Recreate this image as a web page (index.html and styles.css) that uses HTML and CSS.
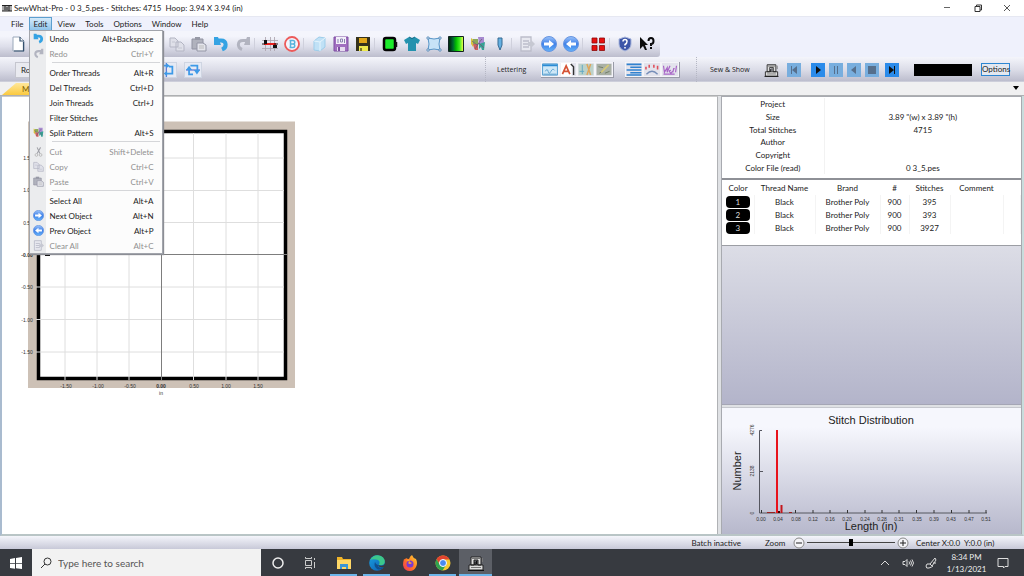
FILE: index.html
```html
<!DOCTYPE html>
<html lang="en">
<head>
<meta charset="utf-8">
<title>SewWhat-Pro</title>
<link rel="stylesheet" href="styles.css">
</head>
<body>
<svg class="defs" aria-hidden="true">
  <defs>
    <linearGradient id="ball" x1="0" y1="0" x2="0" y2="1"><stop offset="0" stop-color="#9cc4fa"/><stop offset=".5" stop-color="#3f80e8"/><stop offset="1" stop-color="#64b4fa"/></linearGradient>
    <linearGradient id="spectrum"><stop offset=".1" stop-color="#031"/><stop offset=".3" stop-color="#063"/><stop offset=".5" stop-color="#0b0"/><stop offset=".75" stop-color="#4e2"/><stop offset="1" stop-color="#ff5"/></linearGradient>
    <linearGradient id="edgeg" x1="0" y1="0" x2="1" y2="1"><stop offset="0" stop-color="#1a9fe0"/><stop offset="1" stop-color="#0b5cb0"/></linearGradient>
    <linearGradient id="foxg" x1="1" y1="0" x2="0" y2="1"><stop offset="0" stop-color="#ffd83a"/><stop offset=".5" stop-color="#ff7a22"/><stop offset="1" stop-color="#f0305a"/></linearGradient>
  </defs>
  <symbol id="i-copy" viewBox="0 0 16 16"><path d="M1 2h5l3 3v6H1zM7 6h5l3 3v6H7z" fill="#dfe0e9" stroke="#b3b5c3"/><path d="M9 12h4M3 6h3" stroke="#c3c5d0"/></symbol>
  <symbol id="i-paste" viewBox="0 0 16 16"><path d="M1 3h11v10H1z" fill="#b0b2bd" stroke="#9193a2"/><path d="M4 1h5v3H4z" fill="#9799a6"/><path d="M6 7h6l3 2v6H6z" fill="#e4e5ec" stroke="#9496a5"/><path d="M8 10h5M8 12h5" stroke="#bbb"/></symbol>
  <symbol id="i-undo" viewBox="0 0 16 16"><path d="M4 4.500h4c6 0 6 7 1 9" fill="none" stroke="#35a3e3" stroke-width="4"/><path d="M1 1h4l3 8H1z" fill="#35a3e3"/></symbol>
  <symbol id="i-redo" viewBox="0 0 16 16"><path d="M12 4.500H8c-6 0-6 7-1 9" fill="none" stroke="#b2b4c0" stroke-width="3"/><path d="M15 1h-3L9 9h6z" fill="#b2b4c0"/></symbol>
  <symbol id="i-right" viewBox="0 0 16 16"><circle cx="8" cy="8" r="7.500" fill="url(#ball)" stroke="#6795e0"/><path d="M3 6.500h5V4l5 4-5 4V9.500H3z" fill="#fff"/></symbol>
  <symbol id="i-left" viewBox="0 0 16 16"><circle cx="8" cy="8" r="7.500" fill="url(#ball)" stroke="#6795e0"/><path d="M13 6.500H8V4L3 8l5 4V9.500h5z" fill="#fff"/></symbol>
  <symbol id="i-list" viewBox="0 0 16 16"><path d="M2 1h10v14H2zM4 5h6M4 8h6M4 11h6" fill="#e8e9f0" stroke="#bcbdca" stroke-width="1.300"/><path d="M9 6h3V4l4 4-4 4v-2H9z" fill="#c6c8d2"/></symbol>
  <symbol id="i-split" viewBox="0 0 16 16"><path d="M1 2l4 3-2 6-2-3z" fill="#d5c23a"/><path d="M3 3h5v5H3z" fill="#8ba75a"/><path d="M8 1h6v7H9z" fill="#a78ad0"/><path d="M3 8h5v6H5l-1-2z" fill="#d0605e"/><path d="M9 8l6-2-1 8h-2l-1-3-2 2z" fill="#35a294"/><path d="M2 5l5 4 5-6M5 13l4-6 5 5" fill="none" stroke="#6d5a78" stroke-width=".8"/></symbol>
  <symbol id="i-machine" viewBox="0 0 16 16"><path d="M1 10h14v5H1zM3 2h10v8h-3V5H6v5H3z" fill="#ddd" stroke="#222"/><path d="M4 3.500h8M3 12.500h10M14.500 3v4" stroke="#777"/><path d="M7 7v3M8.500 6v3M0 15.500h16" stroke="#111"/></symbol>
</svg>

<div class="window">
  <header class="titlebar">
    <svg class="appicon" viewBox="0 0 10 8"><path d="M0 1h10v6H0z" fill="#aaa"/><path d="M0 1.500h10M0 7h10M3 2v4M7 2v5M5 3v3" stroke="#222" fill="none"/></svg>
    <h1 class="title">SewWhat-Pro - 0 3_5.pes - Stitches: 4715&nbsp; Hoop: 3.94 X 3.94 (in)</h1>
    <div class="captions">
      <button aria-label="Minimize"><svg viewBox="0 0 8 8"><path d="M1 3.500h6" stroke="#666"/></svg></button>
      <button aria-label="Restore"><svg viewBox="0 0 8 8"><path d="M1 2.500h5v5H1zM2.500 2V1h5v5H6" fill="none" stroke="#333"/></svg></button>
      <button aria-label="Close"><svg viewBox="0 0 8 8"><path d="M1 1l6 6M7 1L1 7" stroke="#444" stroke-width=".9"/></svg></button>
    </div>
  </header>

  <nav class="menubar">
    <button>File</button>
    <div class="menuhost">
      <button class="open" aria-expanded="true">Edit</button>
      <div class="menu" role="menu">
        <button role="menuitem"><svg><use href="#i-undo"/></svg><span>Undo</span><kbd>Alt+Backspace</kbd></button>
        <button role="menuitem" disabled><svg><use href="#i-redo"/></svg><span>Redo</span><kbd>Ctrl+Y</kbd></button>
        <hr>
        <button role="menuitem"><i></i><span>Order Threads</span><kbd>Alt+R</kbd></button>
        <button role="menuitem"><i></i><span>Del Threads</span><kbd>Ctrl+D</kbd></button>
        <button role="menuitem"><i></i><span>Join Threads</span><kbd>Ctrl+J</kbd></button>
        <button role="menuitem"><i></i><span>Filter Stitches</span><kbd></kbd></button>
        <button role="menuitem"><svg><use href="#i-split"/></svg><span>Split Pattern</span><kbd>Alt+S</kbd></button>
        <hr>
        <button role="menuitem" disabled><svg viewBox="0 0 16 16"><path d="M6 2l4 9M11 2L6 11" stroke="#9fa0a7" stroke-width="1.500"/><circle cx="5" cy="13" r="2" fill="none" stroke="#aaa"/><circle cx="11" cy="13" r="2" fill="none" stroke="#aaa"/></svg><span>Cut</span><kbd>Shift+Delete</kbd></button>
        <button role="menuitem" disabled><svg><use href="#i-copy"/></svg><span>Copy</span><kbd>Ctrl+C</kbd></button>
        <button role="menuitem" disabled><svg><use href="#i-paste"/></svg><span>Paste</span><kbd>Ctrl+V</kbd></button>
        <hr>
        <button role="menuitem"><i></i><span>Select All</span><kbd>Alt+A</kbd></button>
        <button role="menuitem"><svg><use href="#i-right"/></svg><span>Next Object</span><kbd>Alt+N</kbd></button>
        <button role="menuitem"><svg><use href="#i-left"/></svg><span>Prev Object</span><kbd>Alt+P</kbd></button>
        <button role="menuitem" disabled><svg><use href="#i-list"/></svg><span>Clear All</span><kbd>Alt+C</kbd></button>
      </div>
    </div>
    <button>View</button>
    <button>Tools</button>
    <button>Options</button>
    <button>Window</button>
    <button>Help</button>
  </nav>

  <div class="toolrow">
    <div class="toolbar main">
      <button aria-label="New"><svg viewBox="0 0 16 16"><path d="M3 1h7l4 4v10H3z" fill="#fff" stroke="#9aa8ba"/><path d="M10 1v4h4M13.500 6v9H4" fill="none" stroke="#34506e" stroke-width="1.200"/></svg></button>
      <span class="covered"></span>
      <button aria-label="Copy"><svg><use href="#i-copy"/></svg></button>
      <button aria-label="Paste"><svg><use href="#i-paste"/></svg></button>
      <button aria-label="Undo"><svg><use href="#i-undo"/></svg></button>
      <button aria-label="Redo"><svg><use href="#i-redo"/></svg></button>
      <span class="sep"></span>
      <button aria-label="Stitches"><svg viewBox="0 0 16 16"><path d="M3.500 1v14M8.500 1v14M12.500 1v14M0 4.500h16M0 12.500h16" stroke="#aaa0aa" stroke-width=".8"/><path d="M2 8h12" stroke="#e8201c" stroke-width="2"/><path d="M2 4h3v4H2zM11 9h4v3h-4z" fill="#111"/><path d="M0 8h3M12 8h4" stroke="#311"/></svg></button>
      <button aria-label="Stitch B"><svg viewBox="0 0 16 16"><circle cx="8" cy="8" r="7" fill="#f4f4fc" stroke="#ec5a5a" stroke-width="1.800"/><path d="M5.500 4.500h3.500a1.500 1.500 0 010 3.500H6m3 0a1.700 1.700 0 010 3.500H5.500M6.500 4.500v7" fill="none" stroke="#59b4dc" stroke-width="1.500"/></svg></button>
      <span class="sep"></span>
      <button aria-label="3D view"><svg viewBox="0 0 16 16"><path d="M3 5l5-4 6 1v9l-5 4-6-1z" fill="#c0e1f6" stroke="#9dcdea"/><path d="M3 5l6 1 5-4M9 6v9" stroke="#e5f4fc" fill="none"/></svg></button>
      <button aria-label="Save as"><svg viewBox="0 0 16 16"><path d="M1 1h14v14H1z" fill="#a16fc0" stroke="#7e4ea3"/><path d="M3 1h10v7H3z" fill="#f4f0fa"/><path d="M5 3v4M7.500 3h2v3h-2zM11.500 3v4" stroke="#8a85b0" fill="none"/><path d="M4 11h8v4H4z" fill="#e6dcf0"/><path d="M6 11v4" stroke="#7e4ea3" stroke-width="2"/></svg></button>
      <button aria-label="Save"><svg viewBox="0 0 16 16"><path d="M1 1h14v14H1z" fill="#35321c"/><path d="M4 2h8v5H4z" fill="#e1a71a"/><path d="M4 10h9v5H4z" fill="#eee94d"/><path d="M6 12v3" stroke="#55511f" stroke-width="1.500"/></svg></button>
      <span class="sep"></span>
      <button aria-label="Hoop color"><svg viewBox="0 0 16 16"><rect x="2" y="2" width="11" height="12" rx="2" fill="#1cec2c" stroke="#050505" stroke-width="2.500"/><path d="M14 6v5" stroke="#111" stroke-width="2.500"/></svg></button>
      <button aria-label="Garment"><svg viewBox="0 0 16 16"><path d="M0 4l5-3q3 2 6 0l5 3-2 4-2-1v8H4V7L2 8z" fill="#2492ae"/><path d="M5 1q3 3 6 0" stroke="#126a88" fill="none"/></svg></button>
      <button aria-label="Resize"><svg viewBox="0 0 16 16"><path d="M2 2q6 2 12 0-2 6 0 12-6-2-12 0 2-6 0-12z" fill="#c6e2f7" stroke="#5795c8"/><path d="M1 1h2v2H1zM13 1h2v2h-2zM1 13h2v2H1zM13 13h2v2h-2z" fill="#fff" stroke="#4d83b5" stroke-width=".8"/></svg></button>
      <button aria-label="Palette"><svg viewBox="0 0 16 16"><path d="M.500.500h15v15H.500z" fill="url(#spectrum)" stroke="#122"/></svg></button>
      <button aria-label="Split"><svg><use href="#i-split"/></svg></button>
      <button aria-label="Pen"><svg viewBox="0 0 16 16"><path d="M6 2h4v7l-2 5-2-5z" fill="#65b0e2" stroke="#376a92"/></svg></button>
      <span class="sep"></span>
      <button aria-label="Clear"><svg><use href="#i-list"/></svg></button>
      <button aria-label="Next"><svg><use href="#i-right"/></svg></button>
      <button aria-label="Previous"><svg><use href="#i-left"/></svg></button>
      <span class="sep"></span>
      <button aria-label="Arrange"><svg viewBox="0 0 16 16"><path d="M2 2h5v5H2zM9.500 2h5v5h-5zM2 9.500h5v5H2zM9.500 9.500h5v5h-5z" fill="#e81010" stroke="#8d0909" stroke-width=".8"/></svg></button>
      <span class="sep"></span>
      <button aria-label="Help"><svg viewBox="0 0 16 16"><path d="M8 1l6 2v5q0 5-6 7-6-2-6-7V3z" fill="#3d56a8" stroke="#a8b6dc"/><path d="M6 5.500q0-2 2-2t2 2-2 3v1M8 11v1.500" stroke="#fff" fill="none" stroke-width="1.500"/></svg></button>
      <button aria-label="What is this"><svg viewBox="0 0 16 16"><path d="M1 1l8 8H6l2 5H6L4 10l-3 3z" fill="#0a0a0a"/><path d="M9.500 5q0-3 2.500-3t2.500 3-2.500 3v2M12 11v2" stroke="#0a0a0a" fill="none" stroke-width="2"/></svg></button>
    </div>
  </div>

  <div class="toolbands">
    <div class="band first">
      <button class="rotate">Rotate</button>
      <button class="flip" aria-label="Flip vertical"><svg viewBox="0 0 16 16"><path d="M6 0v16" stroke="#1f42c8"/><path d="M2 3h4M9 4h4v8H5" fill="none" stroke="#3d9ae8" stroke-width="2"/><path d="M6 0v6l4-3zM7 9v6l-4-3z" fill="#3d9ae8"/></svg></button>
      <button class="flip" aria-label="Flip horizontal"><svg viewBox="0 0 16 16"><path d="M0 8h16" stroke="#1f42c8"/><path d="M3.500 6v7H8M5 3h8v7" fill="none" stroke="#3d9ae8" stroke-width="2"/><path d="M0 8l3.500-5L7 8zM9 8h7l-3.500 5z" fill="#3d9ae8"/></svg></button>
    </div>
    <div class="band lettering">
      <span class="bandname">Lettering</span>
      <div class="keys">
        <button aria-label="Text"><svg viewBox="0 0 16 14"><path d="M0 1h16v12H0z" fill="#cfe8f7" stroke="#4b9bd0"/><path d="M0 2.500h16" stroke="#2a8bd4" stroke-width="2"/><path d="M3 9q2-4 3 0t3 0 4-1M1 12h14" fill="none" stroke="#5ba0cd"/></svg></button>
        <button aria-label="Font"><svg viewBox="0 0 16 14"><path d="M0 0h12v14H0z" fill="#fff"/><path d="M2 12L6 3l4 9M4 9h5" fill="none" stroke="#d65335" stroke-width="1.800"/><path d="M11 1l3 3v9" stroke="#333" fill="none" stroke-width="1.500"/></svg></button>
        <button aria-label="Applique"><svg viewBox="0 0 16 14"><path d="M0 1h16v12H0z" fill="#bcd2ca"/><path d="M4 2v10M1 9h5" stroke="#5fa8c5"/><path d="M9 1l2 6-2 6M13 1l-2 6 2 6" stroke="#dfa55c" fill="none" stroke-width="1.600"/></svg></button>
        <button aria-label="Edit letters"><svg viewBox="0 0 16 14"><path d="M0 1h16v12H0z" fill="#a9b0a5"/><path d="M2 4l5 1M9 11l5-2M3 11l3-2" stroke="#6d7a62"/><path d="M5 10l8-8" stroke="#d5c878" stroke-width="1.800"/></svg></button>
      </div>
      <div class="keys second">
        <button aria-label="Align"><svg viewBox="0 0 16 14"><path d="M0 1.500h16M4 4.500h12M0 7.500h16M4 10.500h12M0 13h16" stroke="#3182cf" stroke-width="1.700"/></svg></button>
        <button aria-label="Arc"><svg viewBox="0 0 16 14"><path d="M2 12q6-6 12 0" stroke="#768eb9" fill="none" stroke-width="1.500"/><path d="M1.500 7V4M5 5V2M10 2v3M14 3v4" stroke="#e0505b" stroke-width="1.700"/></svg></button>
        <button aria-label="Word"><svg viewBox="0 0 16 14"><path d="M1 3l1 7 3-5 0 5 3-7M9 8a1 1 0 00-1 2 1 1 0 002-1M11 10l1-4 1 0M15 3l-1 7M1 12h12" stroke="#a865c6" fill="none" stroke-width="1.300"/></svg></button>
      </div>
    </div>
    <div class="band show">
      <span class="bandname">Sew &amp; Show</span>
      <button class="machine" aria-label="Sew"><svg><use href="#i-machine"/></svg></button>
      <div class="player">
        <button class="apart" disabled aria-label="First"><svg viewBox="0 0 14 14"><path d="M4 3h1v8H4zM10 3v8L5 7z"/></svg></button>
        <button aria-label="Play"><svg viewBox="0 0 14 14"><path d="M5 3l5 4-5 4z"/></svg></button>
        <button disabled aria-label="Pause"><svg viewBox="0 0 14 14"><path d="M5 3h1v8H5zM8 3h1v8H8z"/></svg></button>
        <button disabled aria-label="Back"><svg viewBox="0 0 14 14"><path d="M9 3v8L4 7z"/></svg></button>
        <button class="small" disabled aria-label="Stop"><svg viewBox="0 0 14 14"><path d="M3 3h8v8H3z"/></svg></button>
        <button aria-label="Last"><svg viewBox="0 0 14 14"><path d="M4 3l5 4-5 4zM9 3h1v8H9z"/></svg></button>
      </div>
      <div class="swatch"></div>
      <button class="options">Options</button>
    </div>
  </div>

  <div class="tabs">
    <button class="tab"><span>MDI</span></button>
    <button class="tablist" aria-label="Window list"><svg viewBox="0 0 8 5"><path d="M1 0h6L4 4z"/></svg></button>
  </div>

  <main class="work">
    <section class="canvas">
      <svg class="hoop" viewBox="20 121 276 276" role="img" aria-label="Hoop">
        <path d="M28 121.500h267V388H28z" fill="#cdc1b6"/>
        <path d="M38.500 131.500h247v247h-247z" fill="#fff" stroke="#000" stroke-width="3.500"/>
        <path d="M65 133v244M97 133v244M129 133v244M193.500 133v244M226 133v244M258 133v244M40 158h244M40 190.500h244M40 222.500h244M40 287h244M40 319.500h244M40 352h244" stroke="#dedede"/>
        <path d="M65 377v3M97 377v3M129 377v3M193.500 377v3M226 377v3M258 377v3M36 287h4M36 319.500h4M36 352h4" stroke="#ddd"/>
        <path d="M161.500 133v247M37 254.500h250" stroke="#7d7d7d"/>
        <path d="M161 165h3M45 254.500h5" stroke="#000" stroke-width="3"/>
        <g class="ticks">
          <text x="66" y="388">-1.50</text><text x="98" y="388">-1.00</text><text x="130" y="388">-0.50</text><text x="161" y="388" class="strong">0.00</text><text x="194" y="388">0.50</text><text x="226" y="388">1.00</text><text x="258" y="388">1.50</text>
          <text x="161" y="395">in</text>
          <text x="28" y="160">1.50</text><text x="28" y="192">1.00</text><text x="28" y="225">0.50</text><text x="27" y="257" class="strong">-0.00</text><text x="27" y="289">-0.50</text><text x="27" y="322">-1.00</text><text x="27" y="354">-1.50</text>
        </g>
      </svg>
    </section>
    <aside class="side">
      <div class="props">
        <table>
          <tr><th scope="row">Project</th><td></td></tr>
          <tr><th scope="row">Size</th><td>3.89 "(w) x 3.89 "(h)</td></tr>
          <tr><th scope="row">Total Stitches</th><td>4715</td></tr>
          <tr><th scope="row">Author</th><td></td></tr>
          <tr><th scope="row">Copyright</th><td></td></tr>
          <tr><th scope="row">Color File (read)</th><td>0 3_5.pes</td></tr>
        </table>
      </div>
      <div class="threads">
        <table>
          <colgroup><col class="c-color"><col class="c-name"><col class="c-brand"><col class="c-num"><col class="c-st"><col class="c-com"><col></colgroup>
          <thead><tr><th>Color</th><th>Thread Name</th><th>Brand</th><th>#</th><th>Stitches</th><th>Comment</th><th></th></tr></thead>
          <tbody>
            <tr><td><span class="chip">1</span></td><td>Black</td><td>Brother Poly</td><td>900</td><td>395</td><td></td><td></td></tr>
            <tr><td><span class="chip">2</span></td><td>Black</td><td>Brother Poly</td><td>900</td><td>393</td><td></td><td></td></tr>
            <tr><td><span class="chip">3</span></td><td>Black</td><td>Brother Poly</td><td>900</td><td>3927</td><td></td><td></td></tr>
          </tbody>
        </table>
      </div>
      <div class="blank"></div>
      <div class="chart">
        <svg viewBox="722 408 299 126" role="img" aria-label="Stitch Distribution">
          <text class="big" x="871" y="424">Stitch Distribution</text>
          <text class="big" x="871" y="530">Length (in)</text>
          <text class="big" transform="translate(741 471) rotate(-90)">Number</text>
          <path d="M762 430.500h-2.500V513H987M760 471.500h3" fill="none" stroke="#55565f"/>
          <path d="M761.500 510v3M795.500 510v3M813 510v3M830 510v3M847.500 510v3M865 510v3M882 510v3M899 510v3M916.500 510v3M934 510v3M951.500 510v3M969 510v3M986 510v3" stroke="#333"/>
          <path d="M767 512.500h8M789 512.500h3" stroke="#922"/>
          <path d="M777 430v83" stroke="#e8131c" stroke-width="2"/><path d="M781.500 505v8" stroke="#c4161c" stroke-width="2"/><path d="M779 511v2" stroke="#400" stroke-width="2"/>
          <g class="ticks">
            <text x="761" y="521">0.00</text><text x="778" y="521">0.04</text><text x="796" y="521">0.08</text><text x="813" y="521">0.12</text><text x="830" y="521">0.16</text><text x="847" y="521">0.20</text><text x="865" y="521">0.24</text><text x="882" y="521">0.28</text><text x="899" y="521">0.31</text><text x="917" y="521">0.35</text><text x="934" y="521">0.39</text><text x="951" y="521">0.43</text><text x="969" y="521">0.47</text><text x="986" y="521">0.51</text>
            <text transform="translate(754 430) rotate(-90)">4276</text><text transform="translate(754 471) rotate(-90)">2138</text><text transform="translate(754 513) rotate(-90)">0</text>
          </g>
        </svg>
      </div>
    </aside>
  </main>

  <footer class="status">
    <span class="batch">Batch inactive</span>
    <label class="zoomname" for="zoom">Zoom</label>
    <button class="round" aria-label="Zoom out"><svg viewBox="0 0 12 12"><circle cx="6" cy="6" r="5"/><path class="sign" d="M3 6h6"/></svg></button>
    <input id="zoom" type="range" min="0" max="100" value="50">
    <button class="round" aria-label="Zoom in"><svg viewBox="0 0 12 12"><circle cx="6" cy="6" r="5"/><path class="sign" d="M3 6h6M6 3v6"/></svg></button>
    <span class="center">Center X:0.0&nbsp; Y:0.0 (in)</span>
  </footer>
</div>

<div class="taskbar">
  <button class="start" aria-label="Start"><svg viewBox="0 0 12 12"><path d="M0 2l5-1v5H0zM6 1l6-1v6H6zM0 6.700h5v5L0 11zM6 6.700h6V12l-6-.800z" fill="#fff"/></svg></button>
  <label class="search">
    <svg viewBox="0 0 12 12"><circle cx="7.500" cy="4.500" r="3.500"/><path d="M5 7l-4 4"/></svg>
    <input type="text" placeholder="Type here to search" aria-label="Search">
  </label>
  <button class="app cortana" aria-label="Cortana"><svg viewBox="0 0 16 16"><circle cx="8" cy="8" r="5" fill="none" stroke="#eee" stroke-width="1.500"/></svg></button>
  <button class="app" aria-label="Task view"><svg viewBox="0 0 16 16"><path d="M2.500 5.500h6v5h-6zM2.500 2v1.500h6V2M2.500 14v-1.500h6V14M11.500 3v2M11.500 7v6" fill="none" stroke="#ddd" stroke-width=".9"/></svg></button>
  <button class="app running" aria-label="File Explorer"><svg viewBox="0 0 16 16"><path d="M1 2h5l1 2h8v10H1z" fill="#f0b429"/><path d="M1 5h14v9H1z" fill="#ffd867"/><path d="M4 14V9h8v5h-2v-2H6v2z" fill="#3c96d6"/></svg></button>
  <button class="app running" aria-label="Edge"><svg viewBox="0 0 16 16"><circle cx="8" cy="8" r="7.800" fill="url(#edgeg)"/><path d="M1 5Q4 0 9 .300q7 1 6.800 7Q15 11 10 10q2-5-3-5.500Q3 4 1 5z" fill="#3cc78b"/><path d="M6 7q-2 5 3 7.500Q13 15 15 12q-6 2-6-2-2 0-3-3z" fill="#10508f"/><path d="M9 10q1 3 6 2l1 0 0-3q-2 3-7 1z" fill="#373a40"/></svg></button>
  <button class="app" aria-label="Firefox"><svg viewBox="0 0 16 16"><path d="M2 4q1 1 2-1 1 1 3 1 1-3 3-4 1 3 4 4 2 4 0 8-2 4-6 4-6 0-7-6 0-3 1-6z" fill="url(#foxg)"/><circle cx="8" cy="9" r="3.500" fill="#7a3bd0"/><path d="M4 5q3-1 4 1l-2 2q2 2 4 0" fill="#ffa52a"/></svg></button>
  <button class="app running" aria-label="Chrome"><svg viewBox="0 0 16 16"><circle cx="8" cy="8" r="7.500" fill="#f7c92f"/><path d="M1.500 4.300A7.500 7.500 0 0114.600 4.500H8L5 10z" fill="#e2442f"/><path d="M1.500 4.300A7.500 7.500 0 007.500 15.500L11 10 5 10z" fill="#2fa24f"/><circle cx="8" cy="8" r="3.500" fill="#4a8af0" stroke="#fff"/></svg></button>
  <button class="app running active" aria-label="SewWhat-Pro"><svg><use href="#i-machine"/></svg></button>
  <div class="tray">
    <button aria-label="Show hidden icons"><svg viewBox="0 0 12 12"><path d="M2 8l4-4 4 4"/></svg></button>
    <button aria-label="Volume"><svg viewBox="0 0 12 12"><path d="M1 4.500h2L5 2.500v7l-2-2H1zM7 4.500q1 1.500 0 3M8.500 3.500q2 2.500 0 5M10 2.500q3 3.500 0 7"/></svg></button>
    <button aria-label="Pen"><svg viewBox="0 0 12 12"><path d="M5 7l5-6 1 2-4 6zM5 7q-4-1-4 2 0 3 3 2t4-2M8 6h3"/></svg></button>
    <time class="clock"><span>8:34 PM</span><span>1/13/2021</span></time>
    <button class="notes" aria-label="Notifications"><svg viewBox="0 0 12 12"><path d="M1 1.500h10v8H8L6.500 11V9.500H1z"/></svg></button>
  </div>
</div>
</body>
</html>
```
FILE: styles.css
```css
* { box-sizing: border-box; }
body {
  margin: 0;
  height: 100vh;
  display: flex;
  flex-direction: column;
  overflow: hidden;
  font-family: Lato, "Open Sans", sans-serif;
  font-size: 8px;
  color: #222;
  background: #f0f0f0;
}
button, input { font: inherit; color: inherit; }
button { margin: 0; padding: 0; border: 0; background: none; }
svg { display: block; }
.defs { position: absolute; width: 0; height: 0; }

.window { flex: 1; min-height: 0; display: flex; flex-direction: column; }

.titlebar { height: 16px; display: flex; align-items: center; padding-left: 2px; background: #fff; }
.appicon { width: 10px; height: 8px; }
.title { flex: 1; margin: 0 0 0 2px; font-size: 8px; font-weight: 400; white-space: nowrap; }
.captions { display: flex; }
.captions button { width: 31px; height: 16px; display: flex; align-items: center; justify-content: center; }
.captions button:last-child { padding-right: 4px; }
.captions svg { width: 8px; height: 8px; }

.menubar { height: 15px; display: flex; padding-left: 6px; background: #eff1fc; border-top: 1px solid #e6e8f2; }
.menubar > button, .menuhost > button { height: 14px; padding: 0 5px; line-height: 14px; }
.menuhost { position: relative; width: 23px; margin-right: 1px; }
.menuhost .open { width: 23px; border: 1px solid #5c9fce; background: linear-gradient(#d5eafa, #8fc3ea); line-height: 12px; padding: 0 4px; }
.menu {
  position: absolute;
  z-index: 5;
  top: 13px;
  left: 0;
  width: 134px;
  border: 1px solid #a2a5ac;
  background: linear-gradient(90deg, #ebecee 16px, #fcfcfc 16px);
  box-shadow: 1px 1px 1px #8c8e95;
}
.menu button { display: flex; align-items: center; width: 100%; height: 15px; padding: 0 8px 0 3px; text-align: left; }
.menu button:disabled { color: #909090; }
.menu svg, .menu i { width: 11px; height: 11px; flex: none; }
.menu span { flex: 1; padding-left: 6px; }
.menu kbd { font-family: inherit; }
.menu hr { height: 1px; margin: 1px 2px 2px 22px; border: 0; background: #d5d6d9; }

.toolrow { height: 26px; display: flex; background: #eff1fc; }
.toolbar { display: flex; align-items: center; padding: 0 2px 0 7px; background: linear-gradient(#f4f5fc 20%, #dddeea 60%, #bcbdcd); border-radius: 0 0 3px 0; }
.toolbar button { width: 22px; display: flex; justify-content: center; }
.toolbar svg { width: 16px; height: 16px; }
.covered { width: 137px; }
.sep { width: 5px; height: 12px; border-left: 1px solid #cfd0dc; }

.toolbands { height: 25px; display: flex; background: linear-gradient(#f4f5fb, #dcdde8 50%, #bdbece 95%, #d8d9e2); }
.band { display: flex; align-items: center; }
.first { flex: 1; padding-left: 15px; }
.rotate { width: 144px; height: 16px; padding-left: 5px; border: 1px solid #c5c6cf; background: #e9eaf0; text-align: left; }
.flip { width: 18px; height: 16px; margin-right: 7px; border: 1px solid #cfd5e2; background: #e6eaf4; }
.flip svg { width: 16px; height: 14px; }
.lettering { width: 211px; padding-left: 11px; border-left: 1px dotted #b5b7c4; }
.show { width: 328px; padding-left: 13px; border-left: 1px dotted #b5b7c4; }
.bandname { width: 44px; font-family: "Open Sans", sans-serif; font-size: 7px; white-space: nowrap; }
.keys { display: flex; border-right: 1px solid #999ba8; border-bottom: 1px solid #999ba8; }
.keys.second { margin-left: 11px; }
.keys button { width: 18px; height: 15px; border: 1px solid #f4f4f8; background: #e3e3ec; }
.keys svg { width: 16px; height: 13px; }
.machine { margin: 0 8px 0 10px; }
.machine svg { width: 15px; height: 14px; }
.player { display: flex; gap: 4px; }
.player button { width: 14px; height: 14px; background: #2b8bea; }
.player button:disabled { background: #78aede; }
.player .apart { margin-right: 6px; }
.player .small { margin-right: 2px; }
.player svg { width: 14px; height: 14px; fill: #111; }
.player button:disabled svg { fill: #566f8c; }
.swatch { width: 58px; height: 12px; margin: 0 9px 0 15px; background: #000; }
.options { width: 29px; height: 13px; border: 1px solid #2c86d2; background: #e3e8f0; line-height: 11px; }

.tabs { height: 14px; display: flex; justify-content: space-between; background: #f0f0f1; border-bottom: 1px solid #aeb0b2; }
.tab { width: 60px; height: 12px; margin: 1px 0 0 2px; padding-left: 20px; text-align: left; color: #7a5a00; line-height: 12px; background: linear-gradient(#ffe79a, #fbc93f); clip-path: polygon(14px 0, 100% 0, 100% 100%, 0 100%); }
.tablist { width: 12px; }
.tablist svg { width: 8px; height: 5px; }

.work { flex: 1; min-height: 0; display: flex; border-left: 2px solid #a9bbcf; border-right: 2px solid #c9dcdc; border-bottom: 2px solid #b9c5c6; background: #dfe1e4; }
.canvas { flex: 1; padding: 24px 0 0 18px; background: #fff; border-top: 1px solid #ccc; border-right: 1px solid #b0b2b5; }
.hoop { width: 276px; height: 276px; }
.ticks text { font: 5px "Liberation Sans", sans-serif; fill: #333; text-anchor: middle; }
.ticks .strong { font-weight: 700; }

.side { width: 301px; margin-left: 3px; display: flex; flex-direction: column; border: 1px solid #a8aab0; border-width: 1px 1px 0 1px; }
table { width: 100%; border-collapse: collapse; table-layout: fixed; text-align: center; }
th, td { padding: 0; font-weight: 400; line-height: 12px; white-space: nowrap; }
.props { height: 82px; padding-top: 1px; background: #fff; border-bottom: 1px solid #8e9096; }
.props table { height: 76px; }
.props th { width: 102px; border-right: 1px solid #f2f2f2; }
.threads { height: 67px; background: #fff; border-top: 1px solid #8e9096; border-bottom: 1px solid #9c9ea4; }
.threads th { height: 15px; }
.threads td { height: 13px; border-right: 1px solid #f4f4f4; }
.c-color { width: 32px; }
.c-name { width: 61px; }
.c-brand { width: 65px; }
.c-num { width: 29px; }
.c-st { width: 41px; }
.c-com { width: 53px; }
.chip { display: block; width: 24px; height: 12px; margin: 0 auto; border-radius: 4px; background: #000; color: #ddd; }
.blank { flex: 1; background: linear-gradient(#dcdde6, #b3b4ca); border-bottom: 1px solid #a5a6b5; }
.chart { margin-top: 2px; border-top: 1px solid #c6c8ce; background: linear-gradient(#f6f7fd 15%, #b7b8cc); }
.chart svg { width: 100%; }
.big { font: 11px "Liberation Sans", sans-serif; fill: #222; text-anchor: middle; }

.status { height: 13px; display: flex; align-items: center; justify-content: flex-end; padding-right: 33px; background: linear-gradient(#f4f5fb, #c8c9d8); }
.batch { margin-right: 24px; white-space: nowrap; }
.zoomname { width: 28px; }
.round svg { width: 12px; height: 12px; fill: #f4f4f8; stroke: #888; }
.round .sign { stroke: #222; }
.status input { appearance: none; width: 88px; height: 10px; margin: 0 2px; background: linear-gradient(#444, #444) center / 100% 1px no-repeat; }
.status input::-webkit-slider-thumb { appearance: none; width: 4px; height: 7px; background: #000; }
.center { width: 75px; margin-left: 7px; white-space: nowrap; }

.taskbar { height: 27px; display: flex; background: #373a40; color: #eee; }
.start { width: 32px; display: flex; align-items: center; justify-content: center; }
.start svg { width: 12px; height: 12px; }
.search { width: 229px; display: flex; align-items: center; gap: 6px; padding-left: 8px; background: #f2f2f2; }
.search svg { width: 12px; height: 12px; fill: none; stroke: #333; }
.search input { flex: 1; min-width: 0; padding: 0; border: 0; outline: 0; background: none; font-size: 10px; color: #444; }
.search input::placeholder { color: #555; opacity: 1; }
.app { width: 33px; display: flex; align-items: center; justify-content: center; }
.app svg { width: 16px; height: 16px; }
.running { background: linear-gradient(#6cb5ea, #6cb5ea) center bottom / 27px 2px no-repeat; }
.active { background: linear-gradient(#6cb5ea, #6cb5ea) center bottom / 33px 2px no-repeat, #5c5f66; }
.tray { margin-left: auto; display: flex; align-items: center; padding-right: 10px; }
.tray button { width: 23px; display: flex; justify-content: center; }
.tray svg { width: 12px; height: 12px; fill: none; stroke: #ddd; }
.clock { width: 49px; display: flex; flex-direction: column; align-items: center; font-size: 8px; line-height: 12px; }
```
